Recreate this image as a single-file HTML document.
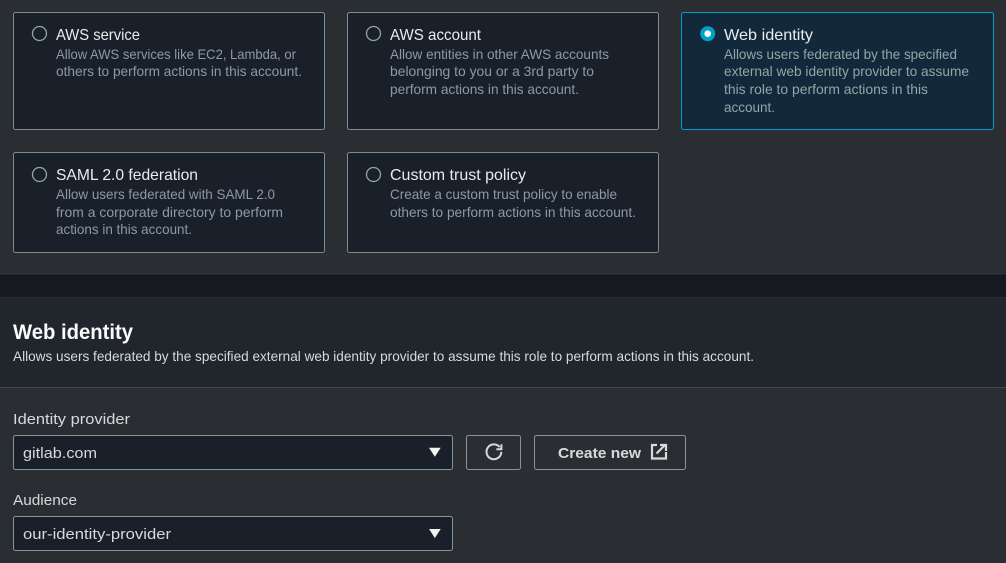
<!DOCTYPE html>
<html lang="en"><head><meta charset="utf-8"><title>Web identity</title>
<style>
html,body{margin:0;padding:0;background:#2a2e33;width:1006px;height:563px;overflow:hidden}
svg{display:block}
text{font-family:"Liberation Sans",sans-serif;font-size:13.6px}
.t{fill:#e9ebed;font-size:16px}
.d{fill:#8d99a8}
.ds{fill:#95a5a6}
.l{fill:#d5dbdb;font-size:15px}
.c{fill:#192029;stroke:#7f8c8d}
.f{fill:#192029;stroke:#879596}
.b{fill:none;stroke:#879596}
</style></head><body>
<svg width="1006" height="563" viewBox="0 0 1006 563" xmlns="http://www.w3.org/2000/svg">
<rect width="1006" height="563" fill="#2a2e33"/>
<rect x="13.5" y="12.5" width="311" height="117" rx="2" class="c"/>
<rect x="347.5" y="12.5" width="311" height="117" rx="2" class="c"/>
<rect x="681.5" y="12.5" width="312" height="117" rx="2" fill="#12293b" stroke="#00a1c9"/>
<rect x="13.5" y="152.5" width="311" height="100" rx="2" class="c"/>
<rect x="347.5" y="152.5" width="311" height="100" rx="2" class="c"/>

<circle cx="39.5" cy="33.5" r="7" fill="none" stroke="#95a5a6" stroke-width="1.3"/>
<circle cx="373.5" cy="33.5" r="7" fill="none" stroke="#95a5a6" stroke-width="1.3"/>
<circle cx="707.7" cy="33.7" r="7.5" fill="#00a1c9"/><circle cx="707.7" cy="33.7" r="3.3" fill="#fff"/>
<circle cx="39.5" cy="174.5" r="7" fill="none" stroke="#95a5a6" stroke-width="1.3"/>
<circle cx="373.5" cy="174.5" r="7" fill="none" stroke="#95a5a6" stroke-width="1.3"/>

<text class="t" x="56" y="40" textLength="84" lengthAdjust="spacingAndGlyphs">AWS service</text>
<text class="d" x="56" y="59" textLength="240" lengthAdjust="spacingAndGlyphs">Allow AWS services like EC2, Lambda, or</text>
<text class="d" x="56" y="76" textLength="246" lengthAdjust="spacingAndGlyphs">others to perform actions in this account.</text>

<text class="t" x="390" y="40" textLength="91" lengthAdjust="spacingAndGlyphs">AWS account</text>
<text class="d" x="390" y="59" textLength="219" lengthAdjust="spacingAndGlyphs">Allow entities in other AWS accounts</text>
<text class="d" x="390" y="76" textLength="204" lengthAdjust="spacingAndGlyphs">belonging to you or a 3rd party to</text>
<text class="d" x="390" y="94" textLength="189" lengthAdjust="spacingAndGlyphs">perform actions in this account.</text>

<text class="t" x="724" y="40" textLength="89" lengthAdjust="spacingAndGlyphs">Web identity</text>
<text class="ds" x="724" y="59" textLength="233" lengthAdjust="spacingAndGlyphs">Allows users federated by the specified</text>
<text class="ds" x="724" y="76" textLength="245" lengthAdjust="spacingAndGlyphs">external web identity provider to assume</text>
<text class="ds" x="724" y="94" textLength="204" lengthAdjust="spacingAndGlyphs">this role to perform actions in this</text>
<text class="ds" x="724" y="112" textLength="51" lengthAdjust="spacingAndGlyphs">account.</text>

<text class="t" x="56" y="180" textLength="142" lengthAdjust="spacingAndGlyphs">SAML 2.0 federation</text>
<text class="d" x="56" y="199" textLength="219" lengthAdjust="spacingAndGlyphs">Allow users federated with SAML 2.0</text>
<text class="d" x="56" y="217" textLength="227" lengthAdjust="spacingAndGlyphs">from a corporate directory to perform</text>
<text class="d" x="56" y="234" textLength="136" lengthAdjust="spacingAndGlyphs">actions in this account.</text>

<text class="t" x="390" y="180" textLength="136" lengthAdjust="spacingAndGlyphs">Custom trust policy</text>
<text class="d" x="390" y="199" textLength="227" lengthAdjust="spacingAndGlyphs">Create a custom trust policy to enable</text>
<text class="d" x="390" y="217" textLength="246" lengthAdjust="spacingAndGlyphs">others to perform actions in this account.</text>

<rect x="0" y="275" width="1006" height="1" fill="#0f1216"/>
<rect x="0" y="276" width="1006" height="21" fill="#16191f"/>
<rect x="0" y="297" width="1006" height="90" fill="#21252c"/>
<rect x="0" y="297" width="1006" height="1" fill="#2a2e33"/>
<rect x="0" y="387" width="1006" height="1" fill="#414750"/>

<text x="13" y="339" fill="#fafafa" style="font-size:21px;font-weight:700" textLength="120" lengthAdjust="spacingAndGlyphs">Web identity</text>
<text x="13" y="361" fill="#d5dbdb" textLength="741" lengthAdjust="spacingAndGlyphs">Allows users federated by the specified external web identity provider to assume this role to perform actions in this account.</text>

<text class="l" x="13" y="424" textLength="117" lengthAdjust="spacingAndGlyphs">Identity provider</text>
<rect x="13.5" y="435.5" width="439" height="34" rx="2" class="f"/>
<text class="l" x="23" y="458" textLength="74" lengthAdjust="spacingAndGlyphs">gitlab.com</text>
<path d="M429 447.7h11.7l-5.85 9z" fill="#f2f3f3"/>

<rect x="466.5" y="435.5" width="54" height="34" rx="2" class="b"/>
<path d="M499.6 447.1A7.4 7.4 0 1 0 501.3 452" fill="none" stroke="#d5dbdb" stroke-width="2"/>
<path d="M501.4 444.2v5h-5" fill="none" stroke="#d5dbdb" stroke-width="2"/>

<rect x="534.5" y="435.5" width="151" height="34" rx="2" class="b"/>
<text x="558" y="458" fill="#d5dbdb" style="font-size:15px;font-weight:700" textLength="83" lengthAdjust="spacingAndGlyphs">Create new</text>
<path d="M657 445h-5v13.5h14V452" fill="none" stroke="#d5dbdb" stroke-width="2.2"/>
<path d="M656.5 453.5 665 445M660 445h6v6" fill="none" stroke="#d5dbdb" stroke-width="2.2"/>

<text class="l" x="13" y="505" textLength="64" lengthAdjust="spacingAndGlyphs">Audience</text>
<rect x="13.5" y="516.5" width="439" height="34" rx="2" class="f"/>
<text class="l" x="23" y="539" textLength="148" lengthAdjust="spacingAndGlyphs">our-identity-provider</text>
<path d="M429 529h11.7l-5.85 9z" fill="#f2f3f3"/>
</svg>
</body></html>
